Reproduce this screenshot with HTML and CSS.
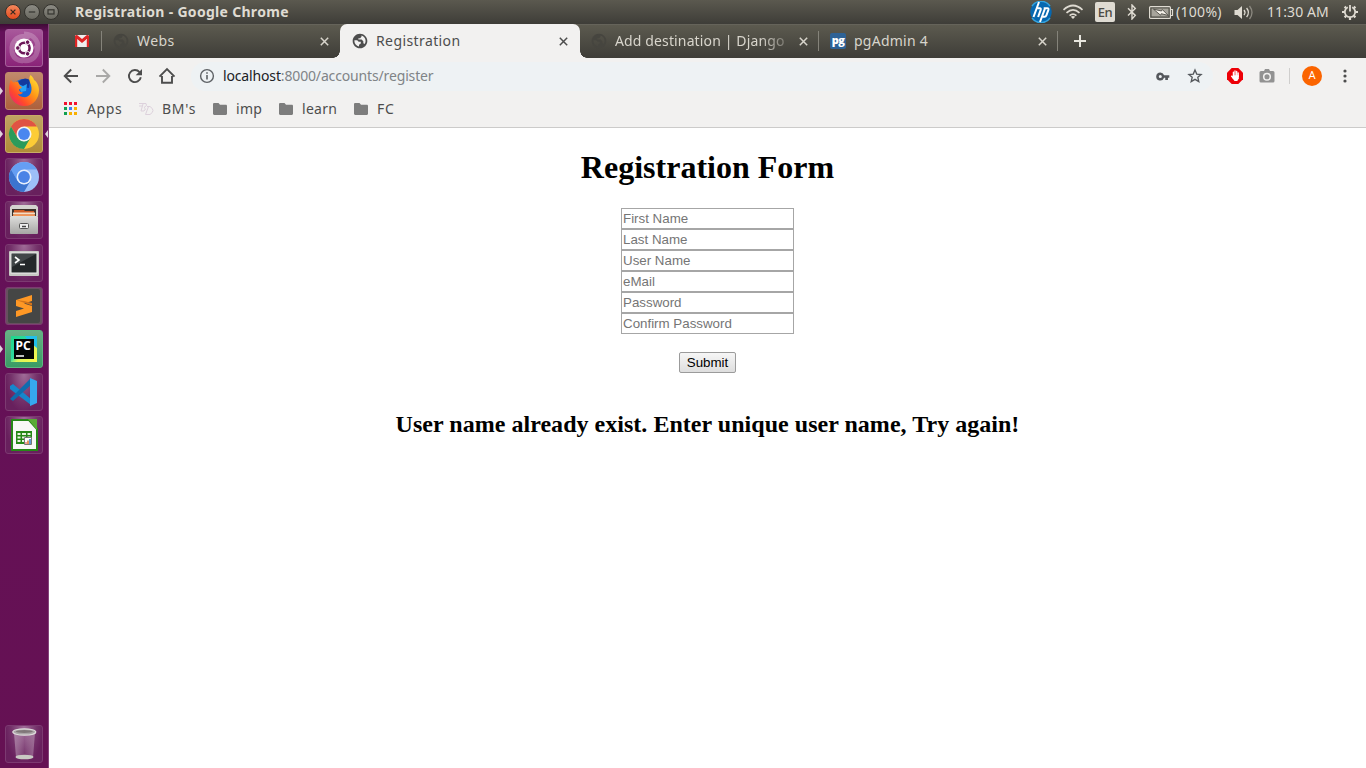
FILE: index.html
```html
<!DOCTYPE html>
<html lang="en">
<head>
<meta charset="utf-8">
<title>Registration</title>
<link rel="stylesheet" href="styles.css">
</head>
<body>
<svg width="0" height="0" class="defs">
  <defs>
    <linearGradient id="orange" x1="0" y1="0" x2="0" y2="1"><stop offset="0" stop-color="#f58a5e"/><stop offset="1" stop-color="#e2491c"/></linearGradient>
    <linearGradient id="grey" x1="0" y1="0" x2="0" y2="1"><stop offset="0" stop-color="#8d8c85"/><stop offset="1" stop-color="#68675f"/></linearGradient>
    <linearGradient id="fox" x1="1" y1="0" x2="0" y2="1"><stop offset="0" stop-color="#fff13c"/><stop offset=".4" stop-color="#ff9a16"/><stop offset=".7" stop-color="#ff4a2b"/><stop offset="1" stop-color="#e3148a"/></linearGradient>
    <linearGradient id="metal" x1="0" y1="0" x2="0" y2="1"><stop offset="0" stop-color="#dededc"/><stop offset="1" stop-color="#a6a6a4"/></linearGradient>
    <linearGradient id="pc" x1="0" y1="0" x2="1" y2="1"><stop offset="0" stop-color="#20d68b"/><stop offset=".45" stop-color="#2fd9a0"/><stop offset=".6" stop-color="#d8f45a"/><stop offset="1" stop-color="#fcf84a"/></linearGradient>
    <linearGradient id="cup" x1="0" y1="0" x2="1" y2="0"><stop offset="0" stop-color="#fff" stop-opacity=".35"/><stop offset=".5" stop-color="#fff" stop-opacity=".06"/><stop offset="1" stop-color="#fff" stop-opacity=".3"/></linearGradient>
    <symbol id="globe" viewBox="0 0 24 24"><path fill="currentColor" d="M12 1C5.900 1 1 5.900 1 12s4.900 11 11 11 11-4.900 11-11S18.100 1 12 1zM10.500 20.300C6.500 19.600 3.600 16.100 3.600 12l.1-1.300 4.100.3 2.200 2.200h3.200v2.600l-2.700 2zM19 16.500l-2-1.200v-3l-2.600-2.400H9.600V7.800h2.600l2-2.200V3.900c3.600 1 6.200 4.200 6.200 8.100 0 1.600-.5 3.200-1.400 4.500z"/></symbol>
    <symbol id="folder" viewBox="0 0 14 12"><path fill="#7d7d7d" d="M1.300 0H5.500L7 1.800h5.800c.7 0 1.200.5 1.200 1.200v7.800c0 .7-.5 1.200-1.200 1.200H1.300C.6 12 0 11.500 0 10.800V1.200C0 .5.600 0 1.300 0z"/></symbol>
    <symbol id="x" viewBox="0 0 9 9"><path d="M.8.800l7.400 7.400M8.200.8L.8 8.200" stroke="currentColor" stroke-width="1.500"/></symbol>
  </defs>
</svg>

<header class="panel">
  <div class="window-buttons">
    <svg width="16" height="16" viewBox="0 0 16 16"><circle cx="8" cy="8" r="7.500" fill="url(#orange)" stroke="#33322d"/><path d="M5.600 5.600l4.800 4.800m0-4.800l-4.800 4.800" stroke="#3b2a20" stroke-width="1.300"/></svg>
    <svg width="16" height="16" viewBox="0 0 16 16"><circle cx="8" cy="8" r="7.500" fill="url(#grey)" stroke="#33322d"/><path d="M4.800 8h6.400" stroke="#35342f" stroke-width="1.200"/></svg>
    <svg width="16" height="16" viewBox="0 0 16 16"><circle cx="8" cy="8" r="7.500" fill="url(#grey)" stroke="#33322d"/><rect x="5" y="5.800" width="6" height="4.200" fill="none" stroke="#35342f" stroke-width="1.200"/></svg>
  </div>
  <span class="window-title">Registration - Google Chrome</span>
  <div class="indicators">
    <svg class="i-hp" width="22" height="22" viewBox="0 0 22 22"><circle cx="11" cy="11" r="10.700" fill="#0768b0"/><path d="M2 5a11 11 0 0 1 18 0M2 17a11 11 0 0 0 18 0" stroke="#35a4df" stroke-width="1.500" fill="none"/><path d="M9 1L3.500 16M7.600 7.300h2.300q1.300 0 .8 1.500L8.100 16M15 7.300L10 21M13.700 7.300h3.800q1.400 0 .9 1.500l-2 5.500q-.5 1.500-1.800 1.500h-1.800" stroke="#fff" stroke-width="2" fill="none"/></svg>
    <svg class="i-wifi" width="22" height="16" viewBox="0 0 22 16" fill="none" stroke="#dfdbd2" stroke-width="1.700"><path d="M1.500 5.800Q11-2.800 20.500 5.800M4.500 8.900Q11 2.800 17.500 8.900M7.600 11.700Q11 8.400 14.400 11.700"/><path d="M8.800 12.800Q11 11 13.200 12.800L11 15z" fill="#dfdbd2" stroke="none"/></svg>
    <span class="lang">En</span>
    <svg class="i-bt" width="10" height="16" viewBox="0 0 10 16"><path d="M1 4.300l7.300 7.100L5 15V1l3.300 3.500L1 11.600" stroke="#dfdbd2" stroke-width="1.400" fill="none"/></svg>
    <svg class="i-bat" width="25" height="13" viewBox="0 0 25 13"><rect x=".6" y=".6" width="20.800" height="11.800" rx="1" fill="none" stroke="#dfdbd2" stroke-width="1.200"/><path d="M22 3.500h1.500v6H22" stroke="#dfdbd2" fill="none" stroke-width="1.200"/><path d="M2.500 2.500h17v8h-17z" fill="#a7a49b"/><path d="M4.500 3.200l8 1.800.8-1.500 6 6-7-1.800-.8 1.500z" fill="#f6f2ea" stroke="#4d4b44" stroke-width=".9"/></svg>
    <span class="pct">(100%)</span>
    <svg class="i-vol" width="20" height="15" viewBox="0 0 20 15"><path d="M.5 5h3L8 1v13L3.500 10h-3z" fill="#dfdbd2"/><g fill="none" stroke-width="1.300"><path d="M10 5q2 2.500 0 5M12.600 3q3.600 4.500 0 9" stroke="#dfdbd2"/><path d="M15.500 1q5 6.500 0 13" stroke="#8c8980"/></g></svg>
    <span class="clock">11:30 AM</span>
    <svg class="i-gear" width="18" height="18" viewBox="0 0 18 18" fill="none" stroke="#dfdbd2"><path d="M6.800 4.300a5.200 5.200 0 1 0 4.400 0" stroke-width="1.800"/><path d="M9 2v6.500" stroke-width="1.800"/><path d="M3.600 3.600l1.500 1.500M14.400 3.600l-1.500 1.500M1 9h2.500M14.500 9H17M3.600 14.400l1.500-1.500M14.400 14.400l-1.500-1.500M9 14.500V17" stroke-width="2.200"/></svg>
  </div>
</header>

<div class="desktop">
  <nav class="launcher">
    <div class="tile ubuntu"><svg width="38" height="38" viewBox="0 0 38 38"><g fill="none" stroke="#fff" stroke-opacity=".22" stroke-width="5"><path d="M7 22C6 11 14 5 25 8M18 32C7 31 4 22 10 13M31 16C35 26 27 34 16 31M19 5c11 0 16 9 13 18"/></g><circle cx="19" cy="19" r="9.500" fill="#fff"/><circle cx="19.300" cy="19" r="5.300" fill="none" stroke="#6b1658" stroke-width="2.600"/><g fill="#6b1658" stroke="#fff" stroke-width="1"><circle cx="12.800" cy="19" r="2.300"/><circle cx="22.600" cy="13.200" r="2.300"/><circle cx="22.600" cy="24.800" r="2.300"/></g></svg></div>
    <div class="tile firefox running"><svg width="38" height="38" viewBox="0 0 38 38"><circle cx="18.500" cy="19" r="12" fill="#1467d9"/><path d="M13 10q6-6 12-2l-1 8-7-1z" fill="#123a9e"/><path d="M13 12l5 2 4-2-1 7-5 1z" fill="#24a4f4"/><path d="M6 7q-3 8-1.500 15C7 30 13 34 19 34c10 0 15-8 15-16 0-5-3-9-5-10-.5-2-2-4-3.500-5C23 7 25 10 26 13c2 8-2 13-8 12-3-.5-5-2-5-3 2 1 4 0 5-1.500-2 0-4-1-4-3l3-2c-2-1-3-3-4-6-2 0-3 0-4 1q-2-1-3-2.500z" fill="url(#fox)"/></svg></div>
    <div class="tile chrome running active"><svg width="38" height="38" viewBox="0 0 38 38"><circle cx="19" cy="19" r="15" fill="#fccc36"/><path d="M19 11.500h13A15 15 0 0 0 6 11.500l6.500 11.300z" fill="#df5344"/><path d="M6 11.500A15 15 0 0 0 19 34l6.500-11.200L19 26.500l-6.500-3.700z" fill="#2b9b5b"/><circle cx="19" cy="19" r="7.500" fill="#f4f4f4"/><circle cx="19" cy="19" r="5.900" fill="#4a87ef"/></svg></div>
    <div class="tile"><svg width="38" height="38" viewBox="0 0 38 38"><circle cx="19" cy="19" r="15" fill="#9dbff8"/><path d="M19 11.500h13A15 15 0 0 0 6 11.500l6.500 11.300z" fill="#659ef3"/><path d="M6 11.500A15 15 0 0 0 19 34l6.500-11.200L19 26.500l-6.500-3.700z" fill="#3c74cf"/><circle cx="19" cy="19" r="7.500" fill="#e7effc"/><circle cx="19" cy="19" r="5.900" fill="#4a83e6"/></svg></div>
    <div class="tile"><svg width="38" height="38" viewBox="0 0 38 38"><path d="M7 4h24l2 2v9H5V6z" fill="#d4d3d0"/><path d="M7 8h24v8H7z" fill="#3c312b"/><path d="M9 9h10l1 1h9v6H9z" fill="#cf5c26"/><path d="M8 11.500h22v2H8z" fill="#f3dcc4"/><path d="M8 13.500h22v2H8z" fill="#f29354"/><rect x="5" y="15" width="28" height="18" rx="1" fill="url(#metal)"/><rect x="14.500" y="22.500" width="9" height="5" rx="1" fill="#eee" stroke="#555"/><path d="M17 25.500h4" stroke="#444" stroke-width="1.500"/></svg></div>
    <div class="tile"><svg width="38" height="38" viewBox="0 0 38 38"><rect x="4" y="7" width="30" height="25" rx="1" fill="#c8c8c4"/><rect x="6" y="9" width="26" height="20" fill="#24282a" stroke="#eee"/><path d="M7 10h24L7 23z" fill="#414648"/><path d="M10 13l4 3-4 3M15 20.500h5" stroke="#fff" stroke-width="1.600" fill="none"/></svg></div>
    <div class="tile sublime"><svg width="38" height="38" viewBox="0 0 38 38"><rect x="3" y="2" width="32" height="34" rx="2" fill="#454645"/><path d="M11 13l16-5v6l-8 2.500 8 2.500v6l-16 5v-6l8-2.500-8-2.500z" fill="#ff9825"/><path d="M11 13l16 5.500v-2.500l-8-2z" fill="#d3741b"/></svg></div>
    <div class="tile pycharm running"><svg width="38" height="38" viewBox="0 0 38 38"><path d="M6 6h26v26H6z" fill="url(#pc)"/><path d="M20 6h12v12l-9-7z" fill="#22bfe9"/><rect x="9" y="9" width="20" height="20" fill="#050505"/><text x="10.500" y="19.500" class="pc-text">PC</text><path d="M11 26h8" stroke="#fff" stroke-width="1.500"/></svg></div>
    <div class="tile"><svg width="38" height="38" viewBox="0 0 38 38"><path d="M5 13l3-2 18 15v6L5 16z" fill="#1686cc"/><path d="M5 26l21-21v7L8 28z" fill="#0e6caf"/><path d="M25 5l7 3v22l-7 3z" fill="#36a7ee"/></svg></div>
    <div class="tile"><svg width="38" height="38" viewBox="0 0 38 38"><path d="M7 4h17l8 9v21H7z" fill="#f8f8f6" stroke="#268817" stroke-width="2"/><path d="M23 3h9v11z" fill="#5aaa36"/><path d="M11 15h16v13H11z" fill="#268817"/><path d="M12.500 17h3v2h-3zm4.500 0h4v2h-4zm5.500 0h3v2h-3zm-10 3.500h3v2h-3zm4.500 0h4v2h-4zm5.500 0h3v2h-3zm-10 3.500h3v2h-3zm4.500 0h4v2h-4z" fill="#e8f4df"/><path d="M19.500 21.500h7v7h-7z" fill="#fff" stroke="#777"/><path d="M21 28v-2" stroke="#d44"/><path d="M23 28v-3.500" stroke="#e07020" stroke-width="1.500"/><path d="M25 28v-5" stroke="#2879c9" stroke-width="1.500"/></svg></div>
    <div class="tile trash"><svg width="38" height="38" viewBox="0 0 38 38"><path d="M9 8h21l-2 24H11z" fill="url(#cup)"/><ellipse cx="19.300" cy="7" rx="11.500" ry="3.200" fill="#aaa5a7" stroke="#dfdcdc" stroke-width="1.200"/><ellipse cx="19.300" cy="6.500" rx="8.500" ry="1.500" fill="#807779"/><ellipse cx="19.500" cy="32" rx="9" ry="2.300" fill="#c9c9c3"/></svg></div>
  </nav>

  <div class="browser">
    <div class="tabs">
      <div class="tab pinned"><svg width="14" height="12" viewBox="0 0 14 12"><rect width="14" height="12" rx="1" fill="#eee"/><path d="M0 1v11h2.200V4L7 8l4.800-4v8H14V1q-1-1.500-2.500-.7L7 4 2.500.3Q1 -.5 0 1z" fill="#df2525"/></svg></div>
      <div class="tab webs"><svg class="fav dim" width="16" height="16"><use href="#globe"/></svg><span class="t-webs">Webs</span><svg class="close" width="9" height="9"><use href="#x"/></svg></div>
      <div class="tab current"><svg class="fav" width="16" height="16"><use href="#globe"/></svg><span class="t-reg">Registration</span><svg class="close" width="9" height="9"><use href="#x"/></svg></div>
      <div class="tab"><svg class="fav dim" width="16" height="16"><use href="#globe"/></svg><span class="t-add">Add destination | Django</span><svg class="close" width="9" height="9"><use href="#x"/></svg></div>
      <div class="tab last"><span class="fav pg">pg</span><span class="t-pg">pgAdmin 4</span><svg class="close" width="9" height="9"><use href="#x"/></svg></div>
      <svg class="plus" width="12" height="12" viewBox="0 0 12 12"><path d="M6 0v12M0 6h12" stroke="#e8e6df" stroke-width="2"/></svg>
    </div>
    <div class="toolbar">
      <div class="nav">
        <svg width="16" height="16" viewBox="0 0 16 16"><path d="M15 8H2.500M8.200 1.500L1.700 8l6.500 6.500" fill="none" stroke="#4d4d4d" stroke-width="1.900"/></svg>
        <svg width="16" height="16" viewBox="0 0 16 16"><path d="M1 8h12.500M7.800 1.500L14.300 8l-6.500 6.500" fill="none" stroke="#a9a8a7" stroke-width="1.900"/></svg>
        <svg width="16" height="16" viewBox="0 0 16 16"><path d="M13.800 9.200A6 6 0 1 1 12.500 4.200" fill="none" stroke="#4d4d4d" stroke-width="1.900"/><path d="M15 1v6.300H8.700z" fill="#4d4d4d"/></svg>
        <svg width="18" height="18" viewBox="0 0 18 18"><path d="M1.500 9.700L9 2.200l7.500 7.500M4 9v6.800h10V9" fill="none" stroke="#4d4d4d" stroke-width="1.900"/></svg>
      </div>
      <div class="omnibox">
        <svg width="16" height="16" viewBox="0 0 16 16"><circle cx="8" cy="8" r="6.400" fill="none" stroke="#5d6165" stroke-width="1.400"/><path d="M8 7v4.500M8 4.200v1.600" stroke="#5d6165" stroke-width="1.600"/></svg>
        <span class="url"><b>localhost</b>:8000/accounts/register</span>
        <svg class="key" width="14" height="9" viewBox="0 0 15 10"><path d="M4.500.5a4.500 4.500 0 1 0 4.200 6H10V9h3V6.500h1.500v-3H8.700A4.500 4.500 0 0 0 4.500.5zm0 6.200a1.700 1.700 0 1 1 0-3.400 1.700 1.700 0 0 1 0 3.400z" fill="#54585c"/></svg>
        <svg class="star" width="16" height="16" viewBox="0 0 24 24"><path d="M12 3l2.600 6.100 6.600.6-5 4.300 1.500 6.500L12 17l-5.700 3.500L7.800 14l-5-4.300 6.600-.6z" fill="none" stroke="#54585c" stroke-width="2"/></svg>
      </div>
      <svg class="abp" width="16" height="16" viewBox="0 0 16 16"><path d="M4.700 0h6.600L16 4.700v6.600L11.300 16H4.700L0 11.300V4.700z" fill="#ed0007"/><path d="M6.400 8V4.200M8 8V3M9.700 8V3.500M11.200 8.500V5M4.600 8.200l2 2" stroke="#fff" stroke-width="1.300" stroke-linecap="round"/><path d="M5.800 7.200h6v3.300L10.300 13H7.500L5 9.800z" fill="#fff"/></svg>
      <svg class="camera" width="16" height="14" viewBox="0 0 16 14"><path d="M5 2l1-2h4l1 2h3q1.500 0 1.500 1.500v8.500q0 1.500-1.500 1.500H2Q.5 13.500.5 12V3.500Q.5 2 2 2z" fill="#929292"/><circle cx="8" cy="7.700" r="3.300" fill="none" stroke="#f2f1f0" stroke-width="1.500"/></svg>
      <i class="rule"></i>
      <span class="avatar">A</span>
      <svg class="dots" width="4" height="14" viewBox="0 0 4 14" fill="#4d4d4d"><circle cx="2" cy="2" r="1.600"/><circle cx="2" cy="7" r="1.600"/><circle cx="2" cy="12" r="1.600"/></svg>
    </div>
    <div class="bookmarks">
      <svg width="13" height="13" viewBox="0 0 13 13"><path d="M0 0h3v3H0zm5 0h3v3H5zm5 0h3v3h-3z" fill="#f2112d"/><path d="M0 5h3v3H0zM0 10h3v3H0z" fill="#11a04f"/><path d="M5 5h3v3H5z" fill="#3e7cf0"/><path d="M10 5h3v3h-3zM5 10h3v3H5zm5 0h3v3h-3z" fill="#f9b000"/></svg><span class="b-apps">Apps</span>
      <svg class="bd" width="16" height="14" viewBox="0 0 16 14" fill="none" stroke="#ddd1dc"><path d="M1 1.500h7q2 2-2 4 3 1 0 3.500H3L5 2M9 4.500h3q6 4 0 8H7.500l3-8M1 4h3"/></svg><span class="b-bm">BM's</span>
      <svg width="14" height="12"><use href="#folder"/></svg><span class="b-imp">imp</span>
      <svg width="14" height="12"><use href="#folder"/></svg><span class="b-learn">learn</span>
      <svg width="14" height="12"><use href="#folder"/></svg><span class="b-fc">FC</span>
    </div>
    <main class="page">
      <h1>Registration Form</h1>
      <form>
        <input type="text" placeholder="First Name">
        <input type="text" placeholder="Last Name">
        <input type="text" placeholder="User Name">
        <input type="email" placeholder="eMail">
        <input type="password" placeholder="Password">
        <input type="password" placeholder="Confirm Password">
        <button type="button">Submit</button>
      </form>
      <h2>User name already exist. Enter unique user name, Try again!</h2>
    </main>
  </div>
</div>
</body>
</html>
```
FILE: styles.css
```css
* { box-sizing: border-box; }
body { margin: 0; width: 1366px; height: 768px; overflow: hidden; background: #fff; font-family: "Noto Sans", sans-serif; font-size: 14px; line-height: 20px; }
svg { display: block; flex: none; }
span { white-space: nowrap; }
.defs { position: absolute; }

.panel { height: 24px; display: flex; align-items: center; background: linear-gradient(#5b594f, #3e3d38); color: #dfdbd2; }
.window-buttons { display: flex; gap: 3px; padding-left: 5px; }
.window-title { margin-left: 16px; width: 214px; font-weight: 700; font-size: 14px; letter-spacing: .3px; }
.indicators { flex: 1; display: flex; align-items: center; justify-content: flex-end; padding-right: 7px; }
.i-wifi { margin-left: 10px; }
.lang { margin-left: 11px; width: 20px; height: 20px; border-radius: 2px; background: #dfdbd2; color: #4b4a44; text-align: center; font-size: 13px; font-weight: 500; letter-spacing: -.5px; line-height: 21px; }
.i-bt { margin-left: 12px; }
.i-bat { margin-left: 12px; }
.pct { margin-left: 3px; width: 46px; letter-spacing: .3px; }
.i-vol { margin-left: 12px; }
.clock { margin-left: 13px; width: 62px; letter-spacing: .1px; }
.i-gear { margin-left: 12px; }
.indicators > :nth-child(-n+5) { transform: translateX(1px); }

.desktop { display: flex; height: 744px; }
.launcher { width: 49px; padding: 5px 0 5px 5px; display: flex; flex-direction: column; gap: 5px; background: linear-gradient(#3e0b35, #65105a 8px, #651153); border-right: 1px solid #85447a; }
.tile { position: relative; width: 38px; height: 38px; border-radius: 3px; background: radial-gradient(ellipse at 50% 0, #a06c98, #75336b 50%, #68205d 75%); border: 1px solid #7c3a71; flex: none; }
.tile svg { margin: -1px; }
.ubuntu { background: linear-gradient(#a8589b, #8a2378); border-color: #a6609b; }
.firefox { background: linear-gradient(#c18a6c, #ad603c); border-color: #c08a6c; }
.chrome { background: linear-gradient(#c0a363, #b08c38); border-color: #c9ac66; }
.pycharm { background: linear-gradient(#68b086, #3a9c64); border-color: #5fb583; }
.sublime { background: #67505f; }
.trash { margin-top: auto; }
.running::before { content: ""; position: absolute; left: -6px; top: 14px; border: 4px solid transparent; border-left: 3px solid #e0d3dc; border-right: 0; }
.active::after { content: ""; position: absolute; right: -6px; top: 14px; border: 4px solid transparent; border-right: 3px solid #e0d3dc; border-left: 0; }
.pc-text { font: 700 12px "Noto Sans", sans-serif; fill: #fff; }

.browser { flex: 1; min-width: 0; display: flex; flex-direction: column; }
.tabs { height: 34px; display: flex; align-items: center; background: linear-gradient(#5c5a4f, #3e3d38); color: #d8d5cc; border-top: 1px solid #65635a; }
.tab { position: relative; width: 239px; height: 33px; display: flex; align-items: center; padding: 0 11px 1px; }
.tab.pinned { width: 53px; padding-left: 26px; }
.tab.pinned::after, .last::before, .last::after { content: ""; position: absolute; right: 0; top: 6px; width: 1px; height: 20px; background: #85837a; }
.last::before { right: auto; left: -1px; }
.tab.webs { width: 238px; }
.tab.current { width: 240px; height: 34px; margin-top: -1px; padding-left: 12px; padding-right: 12px; padding-bottom: 0; background: #f2f1f0; color: #4d4d4d; border-radius: 7px 7px 0 0; }
.tab.current::before, .tab.current::after { content: ""; position: absolute; bottom: 0; width: 7px; height: 7px; }
.tab.current::before { left: -7px; background: radial-gradient(circle at 0 0, transparent 6.500px, #f2f1f0 7px); }
.tab.current::after { right: -7px; background: radial-gradient(circle at 100% 0, transparent 6.500px, #f2f1f0 7px); }
.fav { margin-right: 8px; }
.dim { color: #46453f; }
.close { margin-left: auto; }
.t-webs { letter-spacing: .4px; }
.t-reg { letter-spacing: .4px; }
.t-add { width: 174px; letter-spacing: .13px; -webkit-mask: linear-gradient(90deg, #000 145px, transparent 182px); }
.t-pg { letter-spacing: .25px; }
.pg { width: 16px; height: 16px; border-radius: 2px; background: #2e6296; color: #fff; font: 800 11px/13px "Open Sans", sans-serif; text-align: center; letter-spacing: -.5px; }
.plus { margin: 0 0 1px 16px; }

.toolbar { height: 36px; display: flex; align-items: center; background: #f2f1f0; padding-left: 14px; }
.nav { display: flex; align-items: center; gap: 16px; width: 128px; }
.nav svg:last-child { margin-left: -1px; }
.omnibox { width: 1022px; height: 29px; border-radius: 15px; background: #eef2f4; display: flex; align-items: center; padding: 0 10px 0 8px; }
.url { margin-left: 8px; color: #808487; letter-spacing: -.15px; }
.url b { color: #202124; font-weight: 400; }
.key { margin-left: auto; }
.star { margin-left: 17px; }
.abp { margin-left: 14px; }
.camera { margin-left: 16px; }
.rule { width: 1px; height: 16px; margin-left: 14px; background: #cfcecd; }
.avatar { width: 20px; height: 20px; margin-left: 12px; border-radius: 50%; background: #fb6400; color: #fff; font: 11px/20px Roboto, sans-serif; text-align: center; }
.dots { margin-left: 21px; }

.bookmarks { height: 34px; display: flex; align-items: center; background: #f2f1f0; padding: 0 0 4px 15px; border-bottom: 1px solid #cccbca; color: #4d4d4d; }
.bookmarks span { margin-left: 10px; letter-spacing: .3px; }
.bookmarks .b-apps { width: 51px; letter-spacing: .6px; }
.bookmarks .b-bm { width: 51px; margin-left: 8px; letter-spacing: .7px; }
.bookmarks .b-imp { width: 43px; margin-left: 9px; }
.bookmarks .b-learn { width: 52px; margin-left: 9px; }
.bookmarks .b-fc { margin-left: 9px; letter-spacing: .8px; }

.page { flex: 1; padding: 0 8px; background: #fff; color: #000; font-family: "Liberation Serif", serif; text-align: center; }
h1 { margin: 21px 0 22px; font-size: 32px; line-height: 37px; }
form { display: flex; flex-direction: column; align-items: center; }
input { width: 173px; height: 21px; margin: 0; padding: 1px; border: 1px solid #a6a6a6; border-radius: 0; background: #fff; font: 13.333px "Liberation Sans", sans-serif; }
input::placeholder { color: #757575; }
button { margin-top: 18px; width: 57px; height: 21px; padding: 0; border: 1px solid #9b9b9b; border-radius: 2px; background: linear-gradient(#f6f6f6, #dedede); color: #000; font: 13.333px "Liberation Sans", sans-serif; }
h2 { margin: 38px 0 0; font-size: 24px; line-height: 27px; letter-spacing: .03px; }
```
